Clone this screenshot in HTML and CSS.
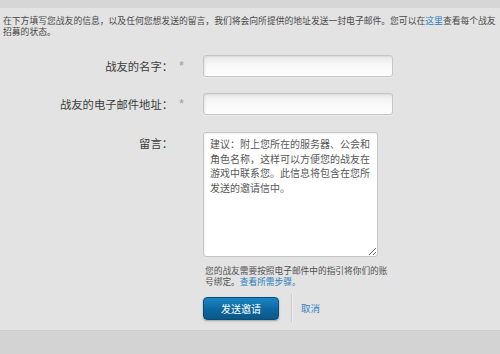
FILE: index.html
```html
<!DOCTYPE html>
<html lang="zh-CN">
<head>
  <meta charset="UTF-8">
  <title>招募战友</title>
  <link rel="stylesheet" href="styles.css">
</head>
<body>

  <div class="top-band"></div>

  <div class="content">
    <p class="intro">在下方填写您战友的信息，以及任何您想发送的留言，我们将会向所提供的地址发送一封电子邮件。您可以在<a href="#">这里</a>查看每个战友招募的状态。</p>

    <form class="invite-form" onsubmit="return false">
      <div class="row">
        <label class="label" for="friendName">战友的名字：</label>
        <span class="req">*</span>
        <input type="text" id="friendName" class="text-input">
      </div>

      <div class="row">
        <label class="label" for="friendEmail">战友的电子邮件地址：</label>
        <span class="req">*</span>
        <input type="text" id="friendEmail" class="text-input">
      </div>

      <div class="row row-msg">
        <label class="label" for="message">留言：</label>
        <span class="req"></span>
        <textarea id="message" class="msg-input">建议：附上您所在的服务器、公会和角色名称，这样可以方便您的战友在游戏中联系您。此信息将包含在您所发送的邀请信中。</textarea>
      </div>

      <div class="row">
        <span class="label"></span>
        <span class="req"></span>
        <div class="field">
          <p class="hint">您的战友需要按照电子邮件中的指引将你们的账号绑定。<a href="#">查看所需步骤。</a></p>
          <div class="actions">
            <button type="submit" class="btn-send">发送邀请</button>
            <span class="divider"></span>
            <a href="#" class="cancel">取消</a>
          </div>
        </div>
      </div>
    </form>
  </div>

  <div class="bottom-band"></div>

</body>
</html>
```

FILE: styles.css
```css
body {
  margin: 0;
  background: #e3e3e3;
  font-family: "Noto Sans CJK SC", "Noto Sans", sans-serif;
  color: #3f3f3f;
  overflow: hidden;
}

a {
  color: #2b7cb9;
  text-decoration: none;
}

.top-band {
  height: 8px;
  background: #d6d6d6;
}

.content {
  height: 322px;
}

.intro {
  margin: 0;
  padding: 8px 3px 0;
  width: 494px;
  font-size: 8.8px;
  line-height: 10.5px;
  color: #484848;
}

.invite-form {
  margin-top: 18px;
}

.row {
  display: flex;
  align-items: flex-start;
  margin-bottom: 16px;
}

.row-msg {
  margin-top: 17px;
  margin-bottom: 0;
}

.label {
  width: 173px;
  flex: none;
  text-align: right;
  font-size: 11.3px;
  line-height: 22px;
  color: #3c3c3c;
}

.req {
  width: 30px;
  flex: none;
  padding-left: 6px;
  box-sizing: border-box;
  font-family: "Liberation Sans", sans-serif;
  font-size: 13px;
  line-height: 22px;
  color: #a0a0a0;
}

.text-input {
  width: 190px;
  height: 22px;
  box-sizing: border-box;
  margin: 0;
  border: 1px solid #c6c6c6;
  border-radius: 3px;
  background: linear-gradient(to bottom, #eaeaea, #f8f8f8 45%, #fdfdfd);
  box-shadow: inset 1px 1px 2px rgba(0,0,0,0.08), 0 1px 0 #ececec;
}

.msg-input {
  width: 175px;
  height: 125px;
  box-sizing: border-box;
  margin: 0;
  padding: 4px 5px 4px 6px;
  border: 1px solid #c6c6c6;
  border-radius: 3px;
  background: #fff;
  box-shadow: inset 1px 1px 2px rgba(0,0,0,0.06);
  font-family: "Noto Sans CJK SC", sans-serif;
  font-size: 10px;
  line-height: 14.5px;
  color: #585858;
}

.field {
  width: 190px;
  padding-left: 2px;
}

.hint {
  margin: 8px 0 0;
  width: 186px;
  font-size: 8.7px;
  line-height: 11px;
  color: #505050;
}

.actions {
  display: flex;
  align-items: center;
  margin-top: 7px;
  margin-left: -2px;
}

.btn-send {
  width: 76px;
  height: 23px;
  padding: 0;
  border: 1px solid #0b4d7a;
  border-radius: 4px;
  background: linear-gradient(to bottom, #1c85c4, #0d679f 55%, #0a5889);
  box-shadow: 0 1px 2px rgba(0,0,0,0.3);
  color: #fff;
  font-family: "Noto Sans CJK SC", sans-serif;
  font-size: 10px;
  cursor: pointer;
}

.divider {
  width: 1px;
  height: 28px;
  margin-left: 12px;
  background: #cdcdcd;
  box-shadow: 1px 0 0 #ececec;
}

.cancel {
  margin-left: 9px;
  font-size: 9.5px;
  color: #3584bf;
}

.bottom-band {
  height: 24px;
  background: #d3d3d3;
  border-top: 1px solid #cbcbcb;
}
```
